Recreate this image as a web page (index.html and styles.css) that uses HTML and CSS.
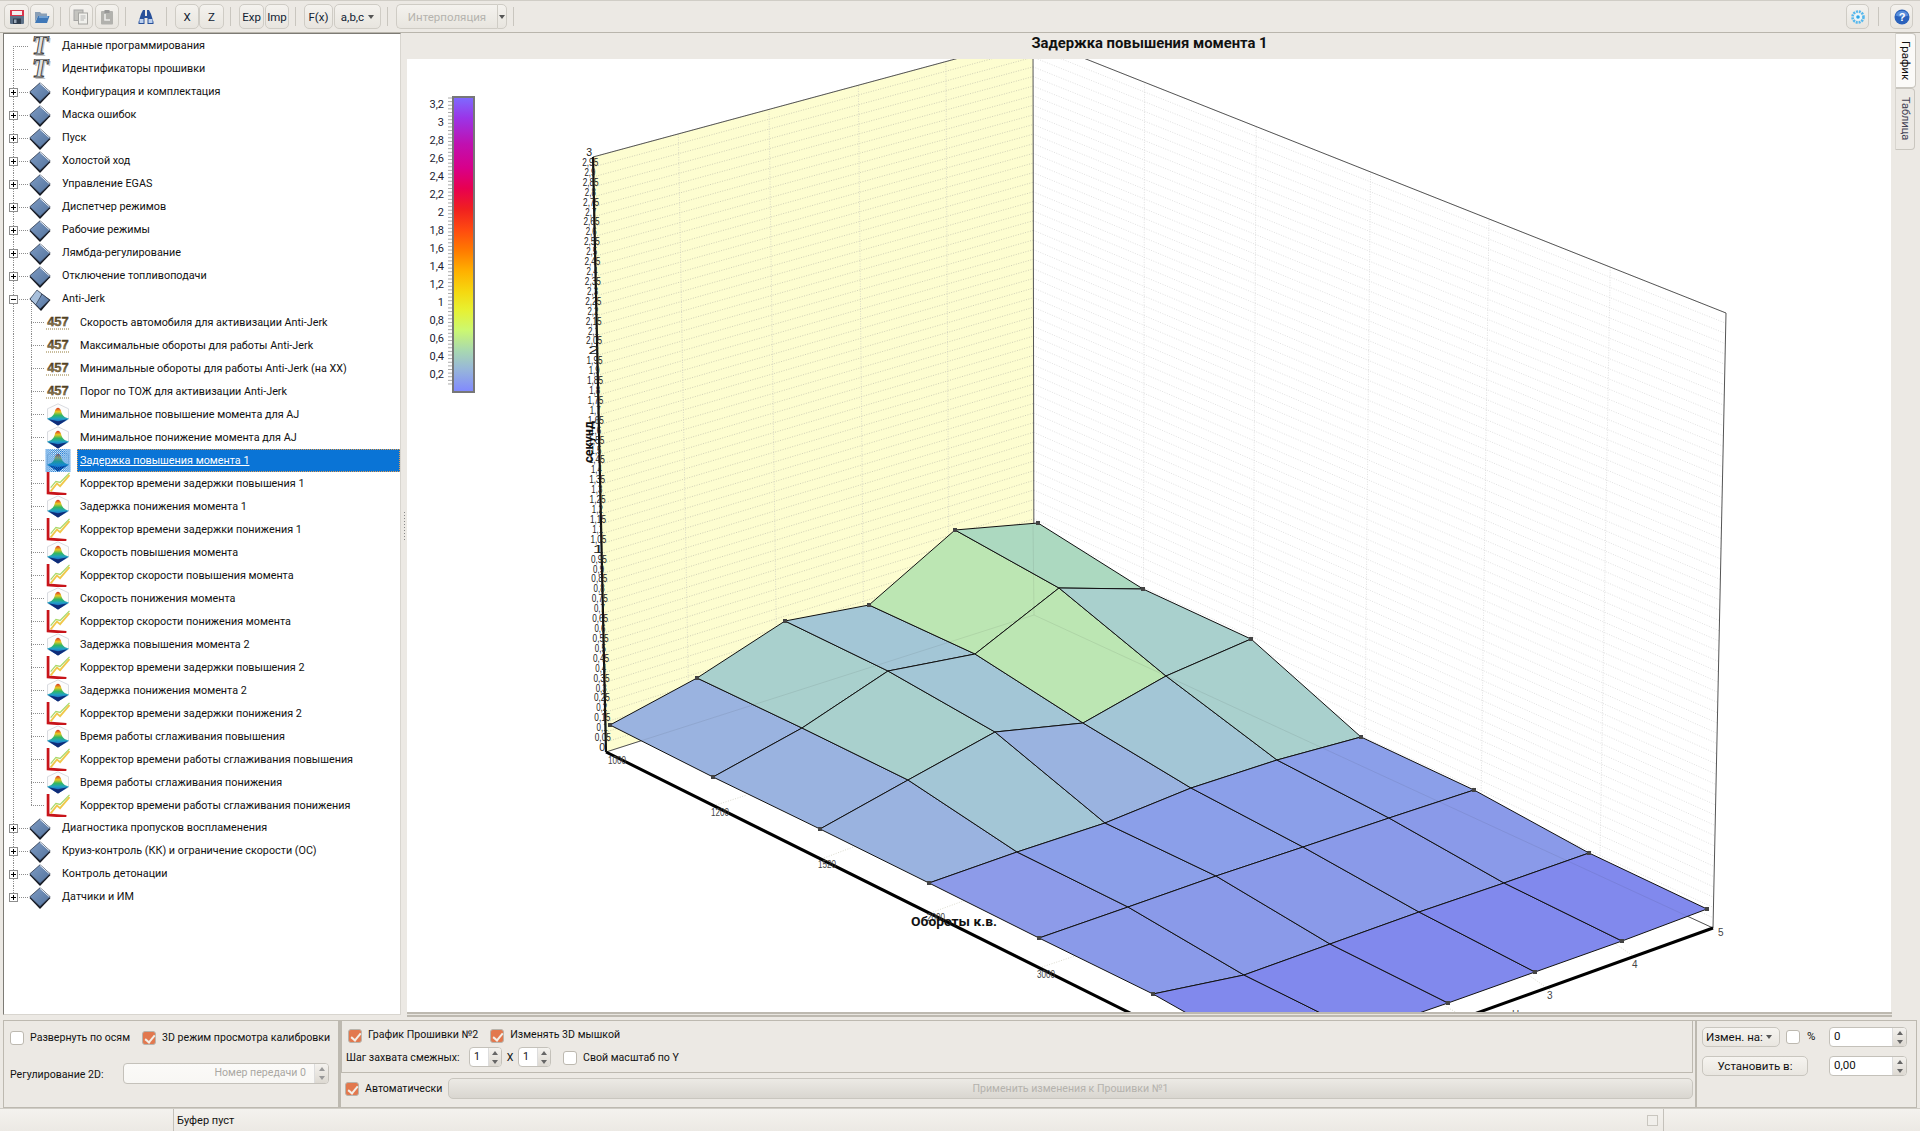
FILE: index.html
```html
<!DOCTYPE html>
<html lang="ru">
<head>
<meta charset="utf-8">
<title>Задержка повышения момента 1</title>
<link rel="stylesheet" href="styles.css">
</head>
<body>
<svg class="defs" width="0" height="0" aria-hidden="true">
  <defs>
    <linearGradient id="gf" x1="0" y1="0" x2="1" y2="1"><stop offset="0" stop-color="#7f9cc4"/><stop offset="1" stop-color="#52729c"/></linearGradient>
    <linearGradient id="gn" x1="0" y1="0" x2="0" y2="1"><stop offset="0" stop-color="#3a2c14"/><stop offset="0.55" stop-color="#6e5a34"/><stop offset="1" stop-color="#b8a272"/></linearGradient>
    <linearGradient id="gm" x1="0" y1="0" x2="0" y2="1"><stop offset="0" stop-color="#d83020"/><stop offset="0.22" stop-color="#e8c820"/><stop offset="0.42" stop-color="#30b860"/><stop offset="0.62" stop-color="#20a0c8"/><stop offset="0.82" stop-color="#1a5cc0"/><stop offset="1" stop-color="#10307c"/></linearGradient>
    <pattern id="chk" width="2" height="2" patternUnits="userSpaceOnUse"><rect width="1" height="1" fill="#0a74d6"/><rect x="1" y="1" width="1" height="1" fill="#0a74d6"/></pattern>
    <symbol id="i-t" viewBox="0 0 20 22"><text x="11.5" y="19.5" class="ico-ts" text-anchor="middle">T</text><text x="10" y="18" class="ico-t" text-anchor="middle">T</text></symbol>
    <symbol id="i-folder" viewBox="0 0 22 22">
      <path d="M11 2.500 21.500 11 11 22 .5 11Z" fill="#12161f"/>
      <path d="M11 .8 21.200 9.800 11 19.600 .8 9.800Z" fill="url(#gf)" stroke="#2e3a4e" stroke-width=".8" stroke-linejoin="round"/>
      <path d="M11 1.400 20.400 9.800" stroke="#eef3f9" stroke-width="1" fill="none"/>
    </symbol>
    <symbol id="i-open" viewBox="0 0 22 22">
      <path d="M9 2 21.500 11 12 22 .5 10Z" fill="#12161f"/>
      <path d="M8 1 13 5 8 17 1 10Z" fill="#a8c0dc" stroke="#2e3a4e" stroke-width=".7"/>
      <path d="M13 5 20.500 11 11 20 7 15.500Z" fill="url(#gf)" stroke="#2e3a4e" stroke-width=".7"/>
    </symbol>
    <symbol id="i-num" viewBox="0 0 26 18"><text x="13" y="12" class="ico-n" text-anchor="middle">457</text><path d="M1 15.500H25" stroke="#c9bd9c" stroke-width="1.800" stroke-dasharray="1 1"/></symbol>
    <symbol id="i-map" viewBox="0 0 24 22">
      <path d="M12 .8 22 5.500 22 15.500 12 21 2 15.500 2 5.500Z" fill="#fcfcfc" stroke="#d2d4da" stroke-width=".8"/>
      <path d="M12 21.500 1.500 15 C6 14 8 12 9 8 C10 3.500 14 3.500 15 8 C16 12 18 14 22.500 15Z" fill="url(#gm)"/>
      <path d="M12 21.500 3 15.500 12 17.500 21 15.500Z" fill="#0f2c78"/>
    </symbol>
    <symbol id="i-mapsel" viewBox="0 0 24 22">
      <use href="#i-map"/>
      <rect width="24" height="22" fill="url(#chk)"/>
    </symbol>
    <symbol id="i-cor" viewBox="0 0 24 22">
      <path d="M2.500 0V20L20 21.500" stroke="#c8141a" stroke-width="2.600" fill="none"/>
      <path d="M5 18.500 11 11 14 13.500 23 3" stroke="#f0c84a" stroke-width="1.800" fill="none"/>
      <path d="M5 15 10 9 14 10 23 .8" stroke="#a8d868" stroke-width="1.200" fill="none"/>
    </symbol>
  </defs>
</svg>

<div class="app">
  <header class="toolbar">
    <div class="grp g1">
      <button class="tb w25"><svg class="tbi" viewBox="0 0 16 16"><rect x="1" y="1" width="14" height="14" rx="1" fill="#5d7188"/><rect x="1" y="1" width="14" height="6" fill="#d8344a"/><rect x="3" y="2" width="10" height="4" fill="#f3eef0"/><rect x="4" y="9.500" width="8" height="5.500" fill="#2f3d4e"/><rect x="5" y="10.500" width="2.500" height="3.500" fill="#9aa8b8"/></svg></button>
      <button class="tb w24"><svg class="tbi" viewBox="0 0 16 16"><path d="M1 3H6L7.500 4.500H13V7H4L1 13Z" fill="#8a9fb6"/><path d="M1 14 4 7H15.500L13 14Z" fill="#3f78b8"/><path d="M5 8H14" stroke="#a5c8ea"/></svg></button>
    </div>
    <i class="sep"></i>
    <div class="grp g2">
      <button class="tb w24 dim"><svg class="tbi" viewBox="0 0 16 16"><rect x="1" y="1" width="9" height="10.500" fill="#bdbdb8" stroke="#999"/><rect x="5.500" y="4" width="9" height="11" fill="#f2f2ee" stroke="#9a9a96"/><path d="M7.500 7H12.500M7.500 9H12.500M7.500 11H11" stroke="#aaa"/></svg></button>
      <button class="tb w24 dim"><svg class="tbi" viewBox="0 0 16 16"><rect x="2" y="2" width="12" height="13.500" rx="1" fill="#a8a8a4"/><rect x="5.500" y="1" width="5" height="3" fill="#888"/><path d="M6 5V11H11" stroke="#ececea" stroke-width="1.600" fill="none"/></svg></button>
    </div>
    <i class="sep"></i>
    <div class="binoc"><svg viewBox="0 0 16 16" class="tbi big"><path d="M3 5 5 1H7V7H9V1H11L13 5 15.500 13V15H9.500V9H6.500V15H.5V13Z" fill="#27509a"/><rect x="1.500" y="10" width="4" height="4" fill="#bcd0ee"/><rect x="10.500" y="10" width="4" height="4" fill="#bcd0ee"/></svg></div>
    <i class="sep"></i>
    <div class="grp">
      <button class="tb w24">X</button>
      <button class="tb w25">Z</button>
    </div>
    <i class="sep"></i>
    <div class="grp g0">
      <button class="tb w25">Exp</button>
      <button class="tb w24">Imp</button>
    </div>
    <i class="sep"></i>
    <div class="grp g0">
      <button class="tb w29">F(x)</button>
      <button class="tb w47 combo">a,b,c<b class="arrow"></b></button>
    </div>
    <i class="sep"></i>
    <div class="grp">
      <button class="tb w101 off">Интерполяция</button>
      <button class="tb w10 split"><b class="arrow"></b></button>
    </div>
    <i class="sep"></i>
    <div class="tb-spacer"></div>
    <button class="tb w23"><svg class="tbi" viewBox="0 0 16 16"><circle cx="8" cy="8" r="5.500" fill="none" stroke="#55b8ee" stroke-width="2.600" stroke-dasharray="2 .9"/><circle cx="8" cy="8" r="3.600" fill="#e8f6fd"/><circle cx="8" cy="8" r="1.800" fill="#2ea6e6"/></svg></button>
    <i class="sep sep-r"></i>
    <button class="tb w23 help"><svg class="tbi" viewBox="0 0 16 16"><circle cx="8" cy="8" r="7.500" fill="#2a62bc"/><path d="M1.500 6.500A7 7 0 0 1 14.500 6.500Q8 9 1.500 6.500Z" fill="#5a8fdc"/><text x="8" y="12" class="q" text-anchor="middle">?</text></svg></button>
  </header>

  <main class="main">
    <aside class="tree">
      <div class="row r0 first"><span class="exp none"></span><svg class="ico"><use href="#i-t"/></svg><span class="lbl">Данные программирования</span></div>
      <div class="row r0"><span class="exp none"></span><svg class="ico"><use href="#i-t"/></svg><span class="lbl">Идентификаторы прошивки</span></div>
      <div class="row r0"><span class="exp plus"></span><svg class="ico"><use href="#i-folder"/></svg><span class="lbl">Конфигурация и комплектация</span></div>
      <div class="row r0"><span class="exp plus"></span><svg class="ico"><use href="#i-folder"/></svg><span class="lbl">Маска ошибок</span></div>
      <div class="row r0"><span class="exp plus"></span><svg class="ico"><use href="#i-folder"/></svg><span class="lbl">Пуск</span></div>
      <div class="row r0"><span class="exp plus"></span><svg class="ico"><use href="#i-folder"/></svg><span class="lbl">Холостой ход</span></div>
      <div class="row r0"><span class="exp plus"></span><svg class="ico"><use href="#i-folder"/></svg><span class="lbl">Управление EGAS</span></div>
      <div class="row r0"><span class="exp plus"></span><svg class="ico"><use href="#i-folder"/></svg><span class="lbl">Диспетчер режимов</span></div>
      <div class="row r0"><span class="exp plus"></span><svg class="ico"><use href="#i-folder"/></svg><span class="lbl">Рабочие режимы</span></div>
      <div class="row r0"><span class="exp plus"></span><svg class="ico"><use href="#i-folder"/></svg><span class="lbl">Лямбда-регулирование</span></div>
      <div class="row r0"><span class="exp plus"></span><svg class="ico"><use href="#i-folder"/></svg><span class="lbl">Отключение топливоподачи</span></div>
      <div class="row r0 opened"><span class="exp minus"></span><svg class="ico"><use href="#i-open"/></svg><span class="lbl">Anti-Jerk</span></div>
      <div class="row r1"><svg class="ico"><use href="#i-num"/></svg><span class="lbl">Скорость автомобиля для активизации Anti-Jerk</span></div>
      <div class="row r1"><svg class="ico"><use href="#i-num"/></svg><span class="lbl">Максимальные обороты для работы Anti-Jerk</span></div>
      <div class="row r1"><svg class="ico"><use href="#i-num"/></svg><span class="lbl">Минимальные обороты для работы Anti-Jerk (на ХХ)</span></div>
      <div class="row r1"><svg class="ico"><use href="#i-num"/></svg><span class="lbl">Порог по ТОЖ для активизации Anti-Jerk</span></div>
      <div class="row r1"><svg class="ico"><use href="#i-map"/></svg><span class="lbl">Минимальное повышение момента для AJ</span></div>
      <div class="row r1"><svg class="ico"><use href="#i-map"/></svg><span class="lbl">Минимальное понижение момента для AJ</span></div>
      <div class="row r1 sel"><svg class="ico"><use href="#i-mapsel"/></svg><span class="lbl">Задержка повышения момента 1</span></div>
      <div class="row r1"><svg class="ico"><use href="#i-cor"/></svg><span class="lbl">Корректор времени задержки повышения 1</span></div>
      <div class="row r1"><svg class="ico"><use href="#i-map"/></svg><span class="lbl">Задержка понижения момента 1</span></div>
      <div class="row r1"><svg class="ico"><use href="#i-cor"/></svg><span class="lbl">Корректор времени задержки понижения 1</span></div>
      <div class="row r1"><svg class="ico"><use href="#i-map"/></svg><span class="lbl">Скорость повышения момента</span></div>
      <div class="row r1"><svg class="ico"><use href="#i-cor"/></svg><span class="lbl">Корректор скорости повышения момента</span></div>
      <div class="row r1"><svg class="ico"><use href="#i-map"/></svg><span class="lbl">Скорость понижения момента</span></div>
      <div class="row r1"><svg class="ico"><use href="#i-cor"/></svg><span class="lbl">Корректор скорости понижения момента</span></div>
      <div class="row r1"><svg class="ico"><use href="#i-map"/></svg><span class="lbl">Задержка повышения момента 2</span></div>
      <div class="row r1"><svg class="ico"><use href="#i-cor"/></svg><span class="lbl">Корректор времени задержки повышения 2</span></div>
      <div class="row r1"><svg class="ico"><use href="#i-map"/></svg><span class="lbl">Задержка понижения момента 2</span></div>
      <div class="row r1"><svg class="ico"><use href="#i-cor"/></svg><span class="lbl">Корректор времени задержки понижения 2</span></div>
      <div class="row r1"><svg class="ico"><use href="#i-map"/></svg><span class="lbl">Время работы сглаживания повышения</span></div>
      <div class="row r1"><svg class="ico"><use href="#i-cor"/></svg><span class="lbl">Корректор времени работы сглаживания повышения</span></div>
      <div class="row r1"><svg class="ico"><use href="#i-map"/></svg><span class="lbl">Время работы сглаживания понижения</span></div>
      <div class="row r1 lastkid"><svg class="ico"><use href="#i-cor"/></svg><span class="lbl">Корректор времени работы сглаживания понижения</span></div>
      <div class="row r0"><span class="exp plus"></span><svg class="ico"><use href="#i-folder"/></svg><span class="lbl">Диагностика пропусков воспламенения</span></div>
      <div class="row r0"><span class="exp plus"></span><svg class="ico"><use href="#i-folder"/></svg><span class="lbl">Круиз-контроль (КК) и ограничение скорости (ОС)</span></div>
      <div class="row r0"><span class="exp plus"></span><svg class="ico"><use href="#i-folder"/></svg><span class="lbl">Контроль детонации</span></div>
      <div class="row r0 last"><span class="exp plus"></span><svg class="ico"><use href="#i-folder"/></svg><span class="lbl">Датчики и ИМ</span></div>
    </aside>
    <div class="splitter"><i class="grip"></i></div>
    <section class="chart">
      <h1 class="chart-title">Задержка повышения момента 1</h1>
      <div class="plot"><svg id="plot" class="plot-svg" viewBox="407 59 1484 953" xmlns="http://www.w3.org/2000/svg"></svg></div>
      <div class="strip"></div>
    </section>
    <nav class="tabs">
      <span class="tab active">График</span>
      <span class="tab">Таблица</span>
    </nav>
  </main>

  <section class="panel">
    <div class="box box-left">
      <div class="line line1">
        <label class="cb"><i class="chk"></i>Развернуть по осям</label>
        <label class="cb cb2"><i class="chk on"></i>3D режим просмотра калибровки</label>
      </div>
      <div class="line line2">
        <span class="reg-label">Регулирование 2D:</span>
        <div class="spin spin-gear"><span class="val ph">Номер передачи 0</span><span class="arrows dim"><b></b><b></b></span></div>
      </div>
    </div>
    <div class="box box-mid">
      <div class="sub">
        <div class="line sline">
          <label class="cb cb-a"><i class="chk on"></i>График Прошивки №2</label>
          <label class="cb cb-b"><i class="chk on"></i>Изменять 3D мышкой</label>
        </div>
        <div class="line sline">
          <span class="step">Шаг захвата смежных:</span>
          <div class="spin spin-s"><span class="val">1</span><span class="arrows"><b></b><b></b></span></div>
          <span class="xsep">X</span>
          <div class="spin spin-s"><span class="val">1</span><span class="arrows"><b></b><b></b></span></div>
          <label class="cb cb-y"><i class="chk"></i>Свой масштаб по Y</label>
        </div>
      </div>
      <div class="line apply">
        <label class="cb cb-auto"><i class="chk on"></i>Автоматически</label>
        <button class="btn apply-btn">Применить изменения к Прошивки №1</button>
      </div>
    </div>
    <div class="box box-right">
      <div class="line rline">
        <div class="btn rcombo">Измен. на:<b class="arrow"></b></div>
        <i class="chk pct"></i><span class="pct-l">%</span>
        <div class="spin spin-v"><span class="val">0</span><span class="arrows"><b></b><b></b></span></div>
      </div>
      <div class="line rline">
        <button class="btn rset">Установить в:</button>
        <div class="spin spin-v"><span class="val">0,00</span><span class="arrows"><b></b><b></b></span></div>
      </div>
    </div>
  </section>

  <footer class="status">
    <span class="st-a"></span>
    <span class="st-b">Буфер пуст</span>
    <i class="st-sq"></i>
    <span class="st-c"></span>
  </footer>
</div>
<script src="chart.js"></script>
</body>
</html>
```
FILE: styles.css
```css
* { box-sizing: border-box; }
html, body { margin: 0; height: 100%; overflow: hidden; }
body { font: 11px/1 Roboto, "Liberation Sans", sans-serif; color: #111; background: #ece9e4; }
.defs { display: block; height: 0; }
.app { display: flex; flex-direction: column; width: 1920px; height: 1131px; }

/* toolbar */
.toolbar { display: flex; align-items: center; height: 33px; padding: 0 7px 0 4px; border-top: 1px solid #d0cdc6; border-bottom: 1px solid #b9b5ac; flex: none; }
.grp { display: flex; }
.g1 { gap: 1px; }
.g2 { gap: 2px; }
.g0 { gap: 1px; }
.sep { display: block; width: 1px; height: 19px; background: #c9c6bf; margin: 0 8px 0 6px; flex: none; }
.sep-r { margin: 0 11px 0 9px; }
.tb-spacer { flex: 1; }
.tb { height: 25px; padding: 0; border: 1px solid #cfccc5; border-radius: 5px; background: linear-gradient(#f4f2ee, #e8e5df); font: 11.5px Roboto, "Liberation Sans", sans-serif; color: #123; display: flex; align-items: center; justify-content: center; flex: none; }
.w10 { width: 10px; } .w23 { width: 23px; } .w24 { width: 24px; } .w25 { width: 25px; } .w29 { width: 29px; } .w47 { width: 47px; } .w101 { width: 101px; }
.tbi { width: 16px; height: 16px; display: block; }
.tbi.big { width: 16px; height: 16px; }
.dim .tbi { opacity: .85; }
.binoc { padding: 0 6px 0 4px; }
.combo { gap: 4px; }
.off { color: #b5b3ae; border-radius: 5px 0 0 5px; border-right: 0; }
.split { border-radius: 0 5px 5px 0; }
.arrow { display: inline-block; width: 0; height: 0; border: 3px solid transparent; border-top: 4px solid #555; border-bottom: 0; }
.q { font: bold 11px "Liberation Sans", sans-serif; fill: #fff; }

/* main */
.main { display: flex; height: 987px; flex: none; padding-left: 3px; }
.tree { width: 398px; height: 982px; padding-top: 1px; background: #fff; border: 1px solid #d8d5cf; border-top-color: #7d7b75; border-left-color: #7d7b75; overflow: hidden; flex: none; }
.row { --v: repeating-linear-gradient(to bottom, #8d8d8d 0 1px, transparent 1px 2px); --h: repeating-linear-gradient(to right, #8d8d8d 0 1px, transparent 1px 2px); display: flex; align-items: center; height: 23px; background-repeat: no-repeat; font-size: 10.8px; }
.r0 { padding-left: 5px; background-image: var(--v), var(--h); background-size: 1px 100%, 16px 1px; background-position: 9px 0, 9px 11px; }
.r0.first { background-size: 1px 12px, 16px 1px; background-position: 9px 11px, 9px 11px; }
.r0.last { background-size: 1px 12px, 16px 1px; }
.r0.opened { background-image: var(--v), var(--h), var(--v); background-size: 1px 100%, 16px 1px, 1px 12px; background-position: 9px 0, 9px 11px, 27px 11px; }
.r1 { padding-left: 41px; background-image: var(--v), var(--v), var(--h); background-size: 1px 100%, 1px 100%, 13px 1px; background-position: 9px 0, 27px 0, 27px 11px; }
.r1.lastkid { background-size: 1px 100%, 1px 12px, 13px 1px; }
.exp { width: 9px; height: 9px; flex: none; background: #fff; border: 1px solid #8d8d8d; }
.exp.none { visibility: hidden; }
.exp.plus { background: linear-gradient(#000,#000) center/5px 1px no-repeat, linear-gradient(#000,#000) center/1px 5px no-repeat, #fff; }
.exp.minus { background: linear-gradient(#000,#000) center/5px 1px no-repeat, #fff; }
.ico { flex: none; display: block; }
.r0 .ico { width: 22px; height: 22px; margin-left: 11px; }
.r1 .ico { width: 26px; height: 23px; }
.lbl { white-space: nowrap; }
.r0 .lbl { margin-left: 11px; }
.r1 .lbl { flex: 1; margin-left: 6px; padding-left: 3px; height: 23px; line-height: 23px; }
.sel .lbl { background: #0a74d6; color: #fff; text-decoration: underline; outline: 1px dotted #e8a050; outline-offset: -1px; }
.ico-t { font: italic bold 27px "Liberation Serif", serif; fill: #e2e2e2; stroke: #3c3c3c; stroke-width: .9; }
.ico-ts { font: italic bold 27px "Liberation Serif", serif; fill: #c4c4c4; }
.ico-n { font: bold 13px "Liberation Sans", sans-serif; fill: url(#gn); stroke: #4c3e22; stroke-width: .35; }

.splitter { width: 6px; display: flex; align-items: center; justify-content: center; flex: none; }
.grip { display: block; width: 1px; height: 30px; background: repeating-linear-gradient(to bottom, #888 0 1px, transparent 1px 3px); }
.chart { display: flex; flex-direction: column; width: 1485px; flex: none; }
.chart-title { margin: 0; height: 26px; padding-top: 1px; text-align: center; font: bold 14.8px/18px Roboto, "Liberation Sans", sans-serif; }
.plot { width: 1484px; height: 953px; background: #fff; flex: none; }
.plot-svg { display: block; width: 1484px; height: 953px; }
.strip { flex: 1; background: linear-gradient(#bdb9b0 0 2px, #e8e5df 2px 3px, #bdb9b0 3px 5px, #ece9e4 5px); }
.tabs { display: flex; flex-direction: column; padding-left: 3px; flex: none; }
.tab { writing-mode: vertical-rl; display: flex; align-items: center; justify-content: center; width: 20px; height: 62px; border: 1px solid #c9c6bf; border-left-color: #d8d5cf; border-radius: 0 4px 4px 0; color: #445; font-size: 11px; background: #ece9e4; }
.tab.active { width: 21px; height: 55px; background: #fbfaf8; color: #111; font-size: 11.5px; }

/* bottom */
.panel { display: flex; height: 88px; flex: none; padding-left: 3px; font-size: 10.6px; }
.box { border: 1px solid #bdb9b0; flex: none; }
.box-left { width: 336px; padding: 6px 0 0 6px; }
.box-mid { width: 1357px; border-left-width: 2px; }
.box-right { width: 221px; padding: 6px 0 0 5px; font-size: 11.5px; }
.line { display: flex; align-items: center; }
.line1 { height: 22px; }
.line2 { height: 21px; margin-top: 14px; }
.cb { display: flex; align-items: center; white-space: nowrap; }
.chk { display: block; width: 14px; height: 14px; margin-right: 6px; flex: none; border: 1px solid #bdb9b0; border-radius: 3px; background: #fff; position: relative; }
.chk.on { background: #e2784e; border-color: #b8b4ac; }
.chk.on::after { content: ""; position: absolute; left: 4px; top: 1px; width: 4px; height: 8px; border: solid #f3efe8; border-width: 0 2px 2px 0; transform: rotate(40deg); }
.cb2 { margin-left: 12px; }
.reg-label { width: 113px; flex: none; white-space: nowrap; padding-top: 4px; }
.spin { display: flex; height: 21px; background: #fff; border: 1px solid #c4c1ba; border-radius: 4px; overflow: hidden; flex: none; }
.val { flex: 1; display: flex; align-items: center; padding-left: 4px; white-space: nowrap; }
.ph { justify-content: flex-end; padding: 0 8px 0 0; color: #aaa8a3; }
.arrows { width: 14px; flex: none; display: flex; flex-direction: column; border-left: 1px solid #ddd; background: linear-gradient(#f4f2ee, #ddd9d2); }
.arrows b { flex: 1; position: relative; }
.arrows b::after { content: ""; position: absolute; left: 50%; top: 50%; margin: -2px 0 0 -3px; border: 3px solid transparent; border-top: 0; border-bottom: 4px solid #666; }
.arrows b + b::after { border-bottom: 0; border-top: 4px solid #666; }
.arrows.dim b::after { border-bottom-color: #999; }
.arrows.dim b + b::after { border-top-color: #999; }
.spin-gear { width: 206px; background: linear-gradient(#fbfaf8, #f8f7f4); }
.sub { width: 1352px; height: 52px; border: 1px solid #bdb9b0; border-top: 0; padding: 4px 0 0 4px; }
.sline { height: 20px; margin-bottom: 2px; }
.sline:first-child { padding-top: 1px; }
.cb-a { margin-left: 2px; }
.cb-b { margin-left: 12px; }
.step { width: 123px; flex: none; white-space: nowrap; padding-top: 3px; }
.spin-s { width: 33px; height: 20px; }
.spin-s .arrows { width: 13px; }
.xsep { width: 16px; text-align: center; flex: none; padding-top: 3px; }
.cb-y { margin-left: 12px; padding-top: 2px; }
.apply { margin-top: 5px; padding-left: 4px; height: 21px; }
.cb-auto { width: 103px; flex: none; padding-top: 1px; }
.btn { height: 21px; border: 1px solid #c9c6bf; border-radius: 5px; background: linear-gradient(#f6f4f0, #e9e6e0); font: 11.5px Roboto, "Liberation Sans", sans-serif; color: #111; padding: 0; }
.apply-btn { width: 1245px; background: linear-gradient(#eceae5, #d9d6d0); color: #b4b2ad; font-size: 10.6px; }
.rline { height: 20px; margin-bottom: 9px; }
.rcombo { width: 78px; height: 20px; display: flex; align-items: center; justify-content: space-between; padding: 0 7px 0 3px; }
.pct { margin: 0 0 0 6px; }
.pct-l { margin-left: 7px; width: 22px; }
.spin-v { width: 78px; height: 20px; }
.rset { width: 106px; height: 20px; margin-right: 21px; }

/* status */
.status { display: flex; align-items: center; height: 23px; flex: none; background: linear-gradient(#f4f2ee, #ece9e4); border-top: 1px solid #d0cdc6; }
.st-a { width: 174px; height: 100%; border-right: 1px solid #c4c1ba; flex: none; }
.st-b { flex: 1; padding: 1px 0 0 3px; }
.st-sq { display: block; width: 11px; height: 11px; background: #f1efeb; border: 1px solid #c9c6bf; flex: none; }
.st-c { width: 257px; height: 100%; margin-left: 5px; border-left: 1px solid #c4c1ba; flex: none; }

/* chart drawing */
.w-l { fill: #fdfdd0; }
.w-r { fill: #fff; }
.dot-l { stroke: #c4c4ae; stroke-width: .8; stroke-dasharray: 1 1.5; fill: none; }
.dot-r { stroke: #d8d8d8; stroke-width: .8; stroke-dasharray: 1 1.5; fill: none; }
.dot-v { stroke: #d0d0c2; stroke-width: .8; stroke-dasharray: 1 1.5; fill: none; }
.edge { stroke: #555; stroke-width: 1; fill: none; }
.axis { stroke: #000; stroke-width: 3; fill: none; }
.axisz { stroke: #111; stroke-width: 2.2; fill: none; }
.mesh { stroke: #111; stroke-width: 1; stroke-linejoin: round; }
.ghost { stroke: rgba(40,40,40,.09); stroke-width: 1; fill: none; }
.node { fill: #444; }
.ztick { font: 10.5px "Liberation Sans", sans-serif; fill: #222; }
.xtick { font: 10px "Liberation Sans", sans-serif; fill: #444; }
.bar-l { font: 11px Roboto, "Liberation Sans", sans-serif; fill: #223; }
.bar-t { stroke: #aaa; stroke-width: 1; }
.bar-b { stroke: #777; stroke-width: 2; }
.ax-title { font: bold 12.5px Roboto, "Liberation Sans", sans-serif; fill: #111; }
```
FILE: chart.js
```js
(function () {
  var svg = document.getElementById('plot');
  var out = [];
  function lerp(a, b, t) { return [a[0] + (b[0] - a[0]) * t, a[1] + (b[1] - a[1]) * t]; }
  function line(a, b, cls) { out.push('<line x1="' + a[0] + '" y1="' + a[1] + '" x2="' + b[0] + '" y2="' + b[1] + '" class="' + cls + '"/>'); }
  function poly(p, cls, fill) {
    out.push('<polygon points="' + p.map(function (q) { return q.join(','); }).join(' ') + '" class="' + cls + '"' + (fill ? ' fill="' + fill + '"' : '') + '/>');
  }
  function text(x, y, s, cls, anchor, extra) {
    out.push('<text x="' + x + '" y="' + y + '" class="' + cls + '" text-anchor="' + (anchor || 'start') + '"' + (extra || '') + '>' + s + '</text>');
  }

  /* walls */
  var O = [606, 752], T = [593, 157], B = [1034, 615], BT = [1033, 38], R = [1713, 928], RT = [1726, 313];
  poly([O, T, BT, B], 'w-l');
  poly([B, BT, RT, R], 'w-r');
  var k, t;
  for (k = 1; k <= 60; k++) {
    t = k / 60;
    line(lerp(O, T, t), lerp(B, BT, t), 'dot-l');
    line(lerp(B, BT, t), lerp(R, RT, t), 'dot-r');
  }
  [0.194, 0.4, 0.603, 0.802].forEach(function (s) { line(lerp(O, B, s), lerp(T, BT, s), 'dot-v'); });
  [0.161, 0.322, 0.487, 0.658, 0.833].forEach(function (s) { line(lerp(B, R, s), lerp(BT, RT, s), 'dot-r'); });
  line(BT, B, 'edge');
  line(T, BT, 'edge');
  line(BT, RT, 'edge');
  line(RT, R, 'edge');
  line(B, R, 'edge');
  line(O, B, 'edge');

  /* floor grid in the gap between surface and axis */
  [[[716, 805], [747, 795]], [[824, 858], [856, 846]], [[933, 912], [966, 900]], [[1042, 967], [1078, 955]], [[1155, 1022], [1190, 1010]]].forEach(function (l) { line(l[0], l[1], 'dot-v'); });
  [[[1636, 958], [1610, 940]], [[1550, 990], [1524, 972]], [[1466, 1018], [1438, 1002]]].forEach(function (l) { line(l[0], l[1], 'dot-v'); });

  /* axes */
  line([606, 752], [1140, 1018], 'axis');
  line([1713, 928], [1463, 1018], 'axis');
  line(O, T, 'axisz');

  /* surface */
  var P = [
    [[610, 725], [697, 678], [785, 621], [869, 605], [955, 530], [1038, 523]],
    [[713, 777], [802, 728], [888, 671], [975, 654], [1059, 588], [1143, 589]],
    [[820, 829], [908, 780], [995, 732], [1083, 723], [1166, 676], [1251, 639]],
    [[929, 883], [1017, 852], [1105, 823], [1191, 788], [1277, 760], [1361, 737]],
    [[1039, 938], [1128, 907], [1216, 876], [1303, 847], [1389, 818], [1474, 790]],
    [[1153, 994], [1244, 975], [1330, 944], [1419, 912], [1504, 883], [1589, 853]],
    [[1275, 1063], [1361, 1033], [1448, 1003], [1535, 972], [1622, 941], [1707, 909]]
  ];
  var a = '#9ab3e0', b = '#a9d0cd', c = '#a3c6d6', g = '#bce6b3', s = '#acd9c0', d = '#8d9be9', e = '#8b9fe9', f = '#8a9ae9', h = '#8189ed';
  var C = [
    [a, b, c, g, s],
    [a, b, c, g, b],
    [a, c, a, c, b],
    [d, e, e, e, e],
    [f, f, f, f, f],
    [h, h, h, h, h]
  ];
  var i, j;
  for (i = 0; i < 6; i++) for (j = 0; j < 5; j++) {
    poly([P[i][j], P[i][j + 1], P[i + 1][j + 1], P[i + 1][j]], 'mesh', C[i][j]);
  }
  /* walls and floor seen through the surface */
  line(O, B, 'ghost');
  line(B, R, 'ghost');
  line([1033, 525], B, 'ghost');

  /* nodes on the border of the surface */
  function node(p) { out.push('<rect x="' + (p[0] - 2) + '" y="' + (p[1] - 2) + '" width="4" height="4" class="node"/>'); }
  for (j = 0; j < 6; j++) { node(P[0][j]); node(P[6][j]); }
  for (i = 1; i < 6; i++) { node(P[i][0]); node(P[i][5]); }

  /* z axis labels */
  for (k = 0; k <= 60; k++) {
    var p = lerp(O, T, k / 60), v = (k * 5 / 100).toFixed(k % 2 ? 2 : 1).replace('.', ',').replace(/,0+$/, '');
    if (k === 0 || k === 60) text(p[0] - 1, p[1] - 1, v, 'ztick', 'end');
    else text(p[0] - (k % 2 ? 11 : 9), p[1] - 1, v, 'ztick', 'start', ' textLength="' + (k % 2 ? 16 : 11) + '" lengthAdjust="spacingAndGlyphs"');
  }
  /* x and y axis labels */
  [[608, 764, '1000'], [711, 816, '1200'], [818, 868, '1520'], [927, 921, '2000'], [1037, 978, '3000']].forEach(function (l) {
    text(l[0], l[1], l[2], 'xtick', 'start', ' textLength="18" lengthAdjust="spacingAndGlyphs"');
  });
  [[1718, 936, '5'], [1632, 968, '4'], [1547, 999, '3']].forEach(function (l) { text(l[0], l[1], l[2], 'xtick'); });
  text(1512, 1018, 'Н', 'xtick');

  /* axis titles */
  text(911, 926, 'Обороты к.в.', 'ax-title', 'start', ' textLength="86" lengthAdjust="spacingAndGlyphs"');
  out.push('<text class="ax-title" text-anchor="middle" transform="translate(593 442) rotate(-90)">секунд</text>');

  /* colour bar */
  var stops = [[0, '#7d6cff'], [.07, '#9a35e8'], [.16, '#c010b0'], [.24, '#d8008a'], [.31, '#e80050'], [.38, '#f02020'], [.45, '#ff4a10'], [.52, '#ff7a00'], [.59, '#ffb000'], [.66, '#f5d810'], [.72, '#e8f030'], [.79, '#ccf870'], [.86, '#a8d8b0'], [.92, '#98b8d8'], [1, '#8088ff']];
  out.push('<defs><linearGradient id="cbar" x1="0" y1="0" x2="0" y2="1">' + stops.map(function (q) { return '<stop offset="' + q[0] + '" stop-color="' + q[1] + '"/>'; }).join('') + '</linearGradient></defs>');
  for (k = 0; k < 80; k++) { var yy = 98 + k * 3.62; line([448, yy], [452, yy], 'bar-t'); }
  out.push('<rect x="453" y="97" width="21" height="295" fill="url(#cbar)" class="bar-b"/>');
  for (k = 0; k < 16; k++) {
    var lv = (3.2 - k * 0.2).toFixed(1).replace('.', ',').replace(',0', '');
    text(444, 108 + k * 18, lv, 'bar-l', 'end');
  }
  svg.innerHTML = out.join('');
})();
```
